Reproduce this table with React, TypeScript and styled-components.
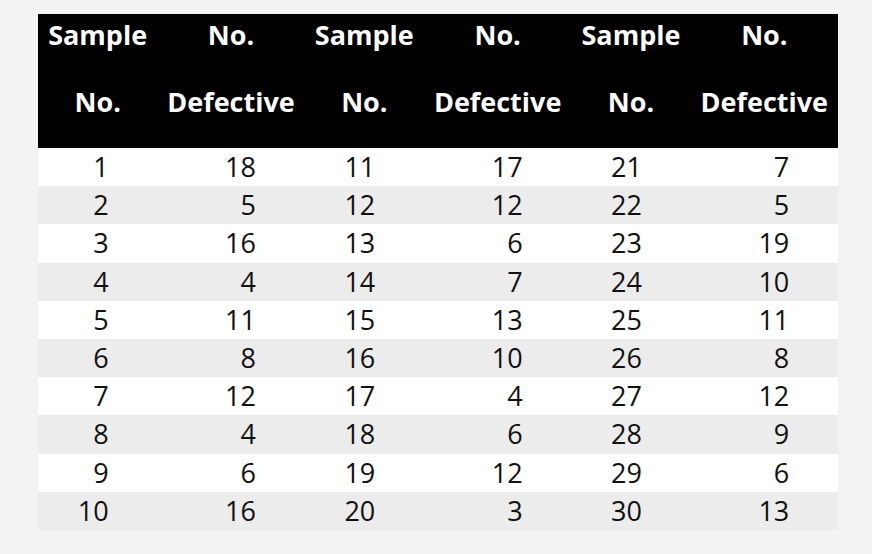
import React from "react";
import styled, { createGlobalStyle } from "styled-components";

const Global = createGlobalStyle`
  html, body { margin: 0; padding: 0; background: #f3f3f3; }
  body { font-family: "Open Sans", "Liberation Sans", sans-serif; }
`;

const Page = styled.div`
  padding: 14px 0 0 38px;
`;

const Table = styled.table`
  width: 800px;
  border-collapse: collapse;
  border-spacing: 0;
  table-layout: fixed;
  font-size: 27px;
  color: #111;
`;

const Col = styled.col<{ $w: number }>`
  width: ${(p) => p.$w}px;
`;

const Head = styled.thead`
  background: #000;
  color: #fff;
`;

const Th = styled.th`
  font-weight: 700;
  text-align: center;
  padding: 2.5px 0 28.5px;
  white-space: nowrap;
  vertical-align: top;
`;

const HeadLine = styled.div<{ $second?: boolean }>`
  line-height: 36px;
  margin-top: ${(p) => (p.$second ? "31px" : "0")};
`;

const Tr = styled.tr<{ $alt: boolean }>`
  background: ${(p) => (p.$alt ? "#ececec" : "#ffffff")};
`;

const Td = styled.td`
  text-align: right;
  padding: 0 48.7px 0 0;
  height: 38.2px;
  line-height: 38.2px;
`;

const data: [number, number][] = [
  [1, 18], [2, 5], [3, 16], [4, 4], [5, 11], [6, 8], [7, 12], [8, 4], [9, 6], [10, 16],
  [11, 17], [12, 12], [13, 6], [14, 7], [15, 13], [16, 10], [17, 4], [18, 6], [19, 12], [20, 3],
  [21, 7], [22, 5], [23, 19], [24, 10], [25, 11], [26, 8], [27, 12], [28, 9], [29, 6], [30, 13],
];

const heads = [
  ["Sample", "No."],
  ["No.", "Defective"],
  ["Sample", "No."],
  ["No.", "Defective"],
  ["Sample", "No."],
  ["No.", "Defective"],
];

export default function App() {
  const rows = Array.from({ length: 10 }, (_, i) => i);
  return (
    <>
      <Global />
      <Page>
        <Table>
          <colgroup>
            {heads.map((_, i) => (
              <Col key={i} $w={i % 2 === 0 ? 119.33 : 147.33} />
            ))}
          </colgroup>
          <Head>
            <tr>
              {heads.map((h, i) => (
                <Th key={i}>
                  <HeadLine>{h[0]}</HeadLine>
                  <HeadLine $second>{h[1]}</HeadLine>
                </Th>
              ))}
            </tr>
          </Head>
          <tbody>
            {rows.map((r) => (
              <Tr key={r} $alt={r % 2 === 1}>
                {[0, 1, 2].map((g) => {
                  const d = data[g * 10 + r];
                  return (
                    <React.Fragment key={g}>
                      <Td>{d[0]}</Td>
                      <Td>{d[1]}</Td>
                    </React.Fragment>
                  );
                })}
              </Tr>
            ))}
          </tbody>
        </Table>
      </Page>
    </>
  );
}
